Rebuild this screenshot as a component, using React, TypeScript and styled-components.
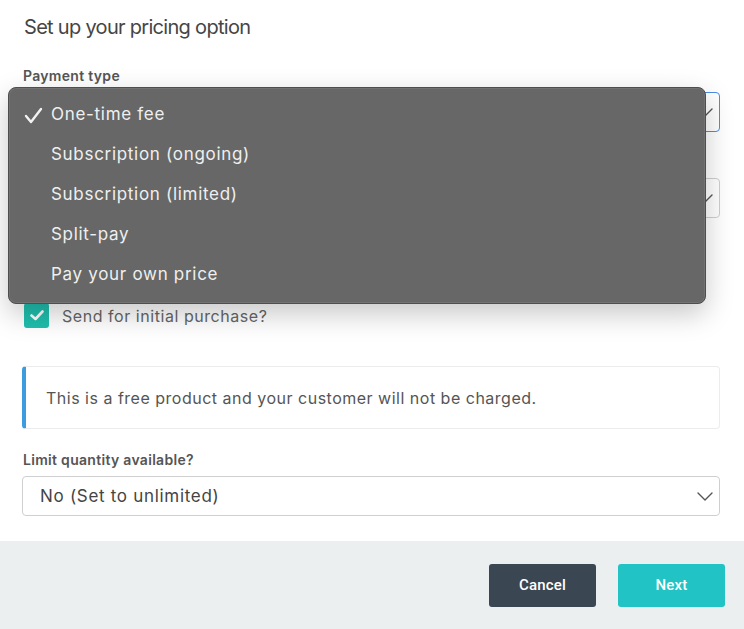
import React from 'react'
import styled, { createGlobalStyle } from 'styled-components'

const GlobalStyle = createGlobalStyle`
  html, body {
    margin: 0;
    padding: 0;
    background: #ffffff;
    font-family: Inter, "Liberation Sans", Arial, sans-serif;
  }
  * { box-sizing: border-box; }
`

const paymentTypes = [
  'One-time fee',
  'Subscription (ongoing)',
  'Subscription (limited)',
  'Split-pay',
  'Pay your own price',
]

const Chevron = () => (
  <svg width="16" height="9" viewBox="0 0 16 9" fill="none">
    <polyline points="1,1 8,8 15,1" stroke="#555" strokeWidth="1.4" strokeLinecap="round" strokeLinejoin="round" />
  </svg>
)

const App = () => {
  return (
    <Page>
      <GlobalStyle />
      <Body>
        <Title>Set up your pricing option</Title>

        <Field gap={27}>
          <Label>Payment type</Label>
          <SelectWrap>
            <Select focused>
              <span />
              <Chevron />
            </Select>
            <Menu>
              {paymentTypes.map((t, i) => (
                <MenuItem key={t}>
                  <Tick>
                    {i === 0 && (
                      <svg width="19" height="17" viewBox="0 0 19 17" fill="none">
                        <polyline points="2,9 7,15 17,2" stroke="#f2f2f2" strokeWidth="2.4" strokeLinecap="round" strokeLinejoin="round" />
                      </svg>
                    )}
                  </Tick>
                  {t}
                </MenuItem>
              ))}
            </Menu>
          </SelectWrap>
        </Field>

        <Field gap={46}>
          <Select>
            <span />
            <Chevron />
          </Select>
        </Field>

        <CheckRow>
          <CheckBox>
            <svg width="14" height="11" viewBox="0 0 14 11" fill="none">
              <polyline points="1.5,5.5 5.5,9 12.5,1.5" stroke="#fff" strokeWidth="2.6" strokeLinecap="round" strokeLinejoin="round" />
            </svg>
          </CheckBox>
          <CheckText>Send for initial purchase?</CheckText>
        </CheckRow>

        <Notice>This is a free product and your customer will not be charged.</Notice>

        <Field gap={22}>
          <Label>Limit quantity available?</Label>
          <Select>
            <span>No (Set to unlimited)</span>
            <Chevron />
          </Select>
        </Field>
      </Body>

      <Footer>
        <Button variant="dark">Cancel</Button>
        <Button variant="primary">Next</Button>
      </Footer>
    </Page>
  )
}

const Page = styled.div`
  width: 744px;
  height: 629px;
  display: flex;
  flex-direction: column;
  overflow: hidden;
`
const Body = styled.div`
  flex: 1;
  padding: 14px 24px 0 22px;
  display: flex;
  flex-direction: column;
`
const Title = styled.h1`
  margin: 0 0 0 2px;
  font-size: 20px;
  line-height: 26px;
  font-weight: 400;
  letter-spacing: -0.7px;
  color: #454545;
`
const Field = styled.div<{ gap: number }>`
  display: flex;
  flex-direction: column;
  margin-top: ${p => p.gap}px;
`
const Label = styled.div`
  font-size: 14px;
  line-height: 17px;
  font-weight: 600;
  letter-spacing: 0.3px;
  color: #555;
  margin: 0 0 8px 1px;
`
const SelectWrap = styled.div`
  position: relative;
`
const Select = styled.div<{ focused?: boolean }>`
  height: 40px;
  display: flex;
  align-items: center;
  justify-content: space-between;
  padding: 0 6px 0 17px;
  border: 1px solid ${p => (p.focused ? '#4a8de8' : '#cfcfcf')};
  border-radius: 4px;
  background: #fff;
  font-size: 17px;
  letter-spacing: 0.7px;
  color: #444;
`
const Menu = styled.div`
  position: absolute;
  left: -14px;
  top: -5px;
  width: 698px;
  height: 217px;
  z-index: 5;
  padding: 6px 0;
  background: #666766;
  border: 1px solid #4e4e4e;
  border-radius: 8px;
  box-shadow: 0 10px 28px rgba(0, 0, 0, 0.22), 0 0 0 1px rgba(255, 255, 255, 0.08) inset;
  display: flex;
  flex-direction: column;
`
const MenuItem = styled.div`
  height: 40px;
  display: flex;
  align-items: center;
  font-size: 17px;
  letter-spacing: 0.7px;
  color: #efefef;
`
const Tick = styled.span`
  width: 42px;
  padding-left: 15px;
  display: inline-flex;
  align-items: center;
  padding-top: 3px;
`
const CheckRow = styled.div`
  display: flex;
  align-items: center;
  gap: 13px;
  margin-top: 85px;
  margin-left: 2px;
`
const CheckBox = styled.div`
  width: 25px;
  height: 25px;
  border-radius: 3px;
  background: #1fbfae;
  display: flex;
  align-items: center;
  justify-content: center;
`
const CheckText = styled.span`
  font-size: 16px;
  letter-spacing: 0.55px;
  color: #666;
`
const Notice = styled.div`
  margin-top: 38px;
  height: 63px;
  display: flex;
  align-items: center;
  padding-left: 20px;
  border: 1px solid #ececec;
  border-left: 4px solid #3d9be0;
  border-radius: 4px;
  font-size: 16px;
  letter-spacing: 0.5px;
  color: #555;
`
const Footer = styled.div`
  height: 88px;
  background: #ebeff0;
  display: flex;
  align-items: center;
  justify-content: flex-end;
  gap: 22px;
  padding: 0 19px 0 0;
`
const Button = styled.button<{ variant: 'dark' | 'primary' }>`
  width: 107px;
  height: 43px;
  border: none;
  border-radius: 3px;
  background: ${p => (p.variant === 'dark' ? '#3a4651' : '#22c3c4')};
  color: #fff;
  font-family: Roboto, "Liberation Sans", sans-serif;
  font-size: 15px;
  font-weight: 500;
  letter-spacing: 0.2px;
`

export default App
